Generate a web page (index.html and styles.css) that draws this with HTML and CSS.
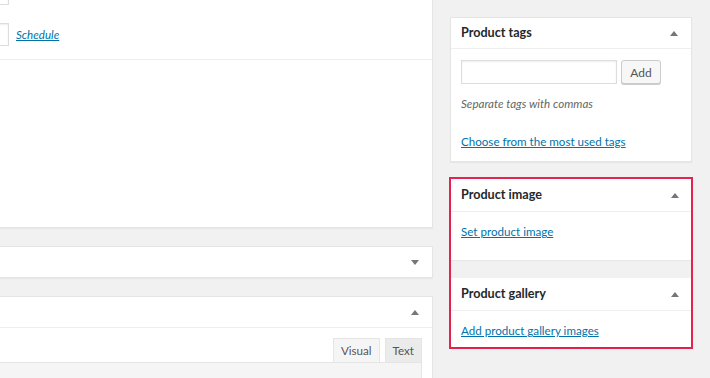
FILE: index.html
```html
<!DOCTYPE html>
<html>
<head>
  <meta charset=utf-8>
  <title>Edit product</title>
  <link rel="stylesheet" href="styles.css">
</head>
<body>

<div class=screen>

  <div class=main>
    <div class="box publish">
      <div class=dateRow><span class=field></span></div>
      <div class="dateRow second"><span class=field></span><a class=schedule href="#">Schedule</a></div>
      <div class=publishBody></div>
    </div>

    <div class=box>
      <div class=boxHead><span class="arrow down"></span></div>
    </div>

    <div class="box editor">
      <div class=boxHead><span class="arrow up"></span></div>
      <div class=editorBody>
        <div class=tabs><span class="tab active">Visual</span><span class=tab>Text</span></div>
        <div class=toolbar></div>
      </div>
    </div>
  </div>

  <div class=side>
    <div class=box>
      <div class=boxHead><h3>Product tags</h3><span class="arrow up"></span></div>
      <div class=inside>
        <div class=tagRow><input type=text class=tagInput /><button class=btn>Add</button></div>
        <p class=howto>Separate tags with commas</p>
        <a class=link href="#">Choose from the most used tags</a>
      </div>
    </div>

    <div class=highlight>
      <div class="box flat">
        <div class=boxHead><h3>Product image</h3><span class="arrow up"></span></div>
        <div class="inside img"><a class=link href="#">Set product image</a></div>
      </div>
      <div class="box flat">
        <div class=boxHead><h3>Product gallery</h3><span class="arrow up"></span></div>
        <div class="inside gallery"><a class=link href="#">Add product gallery images</a></div>
      </div>
    </div>
  </div>

</div>

</body>
</html>
```

FILE: styles.css
```css
* {
  box-sizing: border-box;
  }
html, body {
  width: 100%;
  height: 100%;
  }
body {
  margin: 0;
  background-color: #f1f1f1;
  font: normal 11.6px/18px "Lato", sans-serif;
  color: #23282d;
  overflow: hidden;
  }
.screen {
  display: flex;
  align-items: flex-start;
  gap: 17px;
  }
.main {
  width: 434px;
  margin-left: -1px;
  display: flex;
  flex-direction: column;
  gap: 18px;
  }
.side {
  width: 242px;
  padding-top: 17px;
  }
.box {
  background-color: #fff;
  border: 1px solid #e5e5e5;
  box-shadow: 0 1px 1px rgba(0,0,0,.04);
  }
.boxHead {
  display: flex;
  align-items: center;
  justify-content: space-between;
  height: 30px;
  padding: 0 13px 0 10px;
  }
.box .boxHead + * {
  border-top: 1px solid #eee;
  }
h3 {
  margin: 0;
  font-size: 12.6px;
  font-weight: bold;
  color: #23282d;
  }
.arrow {
  width: 0;
  height: 0;
  margin-left: auto;
  border-left: 4px solid transparent;
  border-right: 4px solid transparent;
  }
.arrow.up {
  border-bottom: 5px solid #72777c;
  }
.arrow.down {
  border-top: 5px solid #72777c;
  }

/* publish box, cut off at the top of the window */
.publish {
  margin-top: -18px;
  border-top: none;
  }
.dateRow {
  display: flex;
  align-items: center;
  gap: 7px;
  }
.dateRow.second {
  margin-top: 18px;
  padding-bottom: 13px;
  border-bottom: 1px solid #eee;
  }
.field {
  display: block;
  width: 40px;
  height: 23px;
  margin-left: -31px;
  background-color: #fff;
  border: 1px solid #ddd;
  box-shadow: inset 0 1px 2px rgba(0,0,0,.07);
  }
.schedule {
  font-style: italic;
  color: #0073aa;
  }
.publishBody {
  height: 167px;
  }

/* editor */
.editorBody {
  padding: 10px 10px 0 0;
  }
.tabs {
  display: flex;
  justify-content: flex-end;
  gap: 5px;
  }
.tab {
  height: 24px;
  line-height: 23px;
  padding: 0 7px;
  color: #555;
  background-color: #ebebeb;
  border: 1px solid #e5e5e5;
  border-bottom: none;
  }
.tab.active {
  padding: 0 7px;
  background-color: #f5f5f5;
  }
.toolbar {
  height: 30px;
  background-color: #f5f5f5;
  border: 1px solid #e5e5e5;
  border-left: none;
  }

/* sidebar */
.inside {
  padding: 11px 10px 10px;
  }
.tagRow {
  display: flex;
  gap: 4px;
  }
.tagInput {
  width: 156px;
  height: 24px;
  margin: 0;
  border: 1px solid #ddd;
  box-shadow: inset 0 1px 2px rgba(0,0,0,.07);
  outline: none;
  }
.btn {
  width: 40px;
  height: 24px;
  padding: 0;
  font: normal 12px "Lato", sans-serif;
  color: #555;
  background-color: #f7f7f7;
  border: 1px solid #ccc;
  border-radius: 3px;
  box-shadow: 0 1px 0 #ccc;
  }
.howto {
  margin: 11px 0 20px;
  font-style: italic;
  color: #666;
  }
.link {
  color: #0073aa;
  }
.highlight {
  width: 244px;
  margin: 15px 0 0 -1px;
  border: 2px solid #e5234e;
  }
.box.flat {
  border: none;
  }
.box.flat .boxHead {
  height: 32px;
  padding-left: 10px;
  padding-right: 12px;
  }
.box.flat + .box.flat {
  margin-top: 18px;
  }
.inside.img {
  padding: 11px 10px 19px;
  }
.inside.gallery {
  padding: 11px 10px 7px;
  }
```
